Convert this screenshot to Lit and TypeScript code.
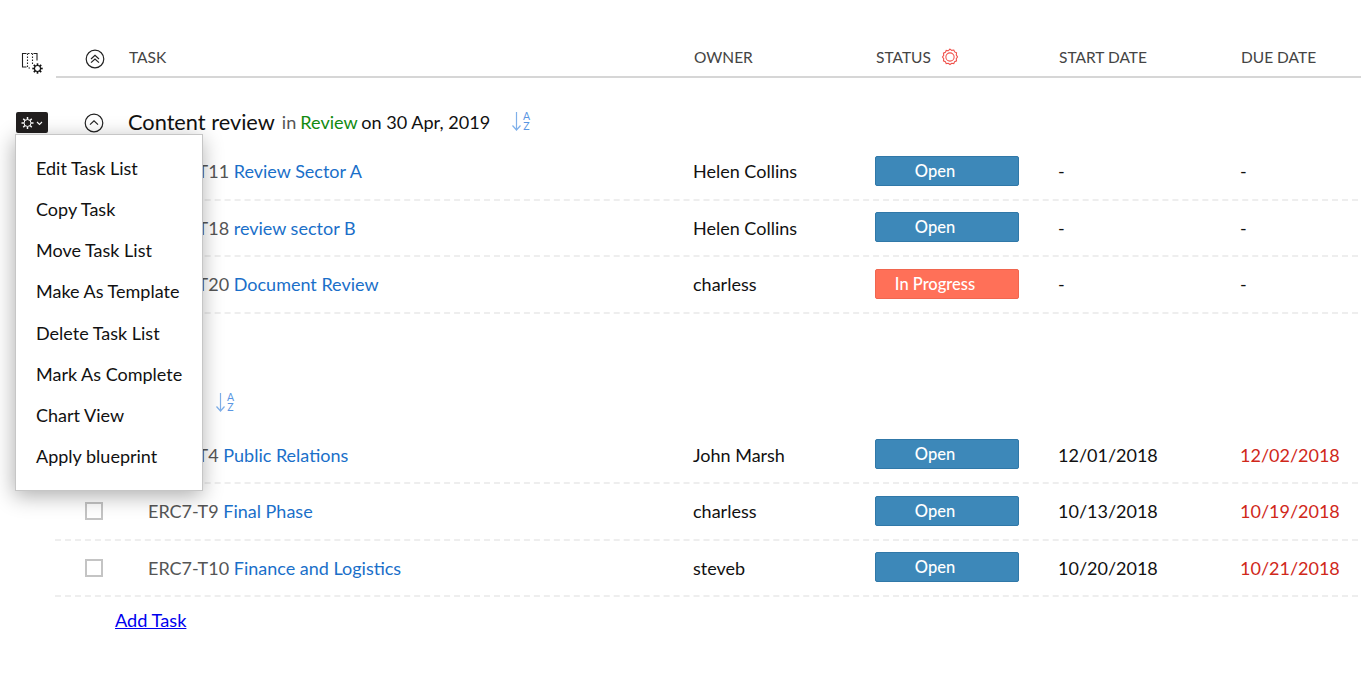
import { LitElement, html, css, svg } from "lit";
import { customElement } from "lit/decorators.js";

type Row = { prefix: string; id: string; occluded: boolean; name: string; owner: string; status: string; start: string; due: string };

const rowsA: Row[] = [
  { prefix: "ERC7-", id: "T11", occluded: true, name: "Review Sector A", owner: "Helen Collins", status: "Open", start: "-", due: "-" },
  { prefix: "ERC7-", id: "T18", occluded: true, name: "review sector B", owner: "Helen Collins", status: "Open", start: "-", due: "-" },
  { prefix: "ERC7-", id: "T20", occluded: true, name: "Document Review", owner: "charless", status: "In Progress", start: "-", due: "-" },
];
const rowsB: Row[] = [
  { prefix: "ERC7-", id: "T4", occluded: true, name: "Public Relations", owner: "John Marsh", status: "Open", start: "12/01/2018", due: "12/02/2018" },
  { prefix: "ERC7-", id: "T9", occluded: false, name: "Final Phase", owner: "charless", status: "Open", start: "10/13/2018", due: "10/19/2018" },
  { prefix: "ERC7-", id: "T10", occluded: false, name: "Finance and Logistics", owner: "steveb", status: "Open", start: "10/20/2018", due: "10/21/2018" },
];
const menu = ["Edit Task List", "Copy Task", "Move Task List", "Make As Template", "Delete Task List", "Mark As Complete", "Chart View", "Apply blueprint"];

function gear(cx: number, cy: number, r: number, teeth: number, color: string, sw: number) {
  const rays = [];
  for (let i = 0; i < teeth; i++) {
    const a = (i * Math.PI * 2) / teeth;
    rays.push(svg`<line x1=${cx + Math.cos(a) * r * 0.6} y1=${cy + Math.sin(a) * r * 0.6} x2=${cx + Math.cos(a) * r} y2=${cy + Math.sin(a) * r} stroke=${color} stroke-width=${sw * 1.5} />`);
  }
  return svg`<circle cx=${cx} cy=${cy} r=${r * 0.58} fill="none" stroke=${color} stroke-width=${sw} />${rays}`;
}

const sortIcon = html`<svg class="sort" width="20" height="22" viewBox="0 0 20 22" fill="none" stroke="#7fb0ea" stroke-width="1.2">
  <path d="M5.500 1V19M1.500 14.500l4 4.500 4-4.500" />
  <text x="15.500" y="8.500" text-anchor="middle" class="az">A</text>
  <text x="15.500" y="19" text-anchor="middle" class="az">Z</text>
</svg>`;

const collapseAll = html`<svg width="20" height="20" viewBox="0 0 20 20" fill="none" stroke="#222" stroke-width="1.200">
  <circle cx="10" cy="10" r="8.800" />
  <path d="M6 10l4-3.600 4 3.600M6 13.600l4-3.600 4 3.600" />
</svg>`;
const collapseOne = html`<svg width="20" height="20" viewBox="0 0 20 20" fill="none" stroke="#222" stroke-width="1.200">
  <circle cx="10" cy="10" r="8.800" />
  <path d="M6 11.600l4-3.800 4 3.800" />
</svg>`;
const columnsIcon = html`<svg width="24" height="24" viewBox="0 0 24 24" fill="none" stroke="#222" stroke-width="1.100">
  <path d="M5.500 2.500H1.500v13.500h4M12.500 2.500h3.500v7" />
  <path d="M6.500 2.500v15M11.500 2.500v11" stroke-dasharray="1.600 1.400" />
  <path d="M7 2.500h4" stroke-dasharray="1.500 1.500" />
  <path d="M7.500 17h3" stroke-dasharray="1.500 1.500" />
  ${gear(16.500, 17.500, 5.200, 8, "#111", 1.100)}
</svg>`;
const statusGear = html`<svg width="18" height="18" viewBox="0 0 17 17" fill="none" stroke="#f0504a" stroke-width="1">
  <path d="M8.500 1l1.600 1.200 2-.3.800 1.800 1.800.8-.3 2L15.600 8.500l-1.200 1.600.3 2-1.800.8-.8 1.800-2-.3-1.600 1.200-1.600-1.200-2 .3-.8-1.800-1.800-.8.3-2L1.400 8.500l1.200-1.600-.3-2 1.800-.8.8-1.800 2 .3z" />
  <circle cx="8.500" cy="8.500" r="3.900" />
</svg>`;

@customElement("app-root")
export class AppRoot extends LitElement {
  static styles = css`
    :host {
      display: block;
      position: relative;
      height: 697px;
      overflow: hidden;
      background: #fff;
      font-family: Lato, "Open Sans", sans-serif;
      color: #111;
    }
    .grid {
      display: grid;
      grid-template-columns: 30px 44px 564px 182px 183px 182px 1fr;
      align-items: center;
      margin-left: 55px;
    }
    .head {
      height: 36px;
      margin-top: 37px;
      margin-left: 56px;
      grid-template-columns: 29px 44px 565px 182px 183px 182px 1fr;
      position: relative;
      border-bottom: 2px solid #d6d6d6;
      padding-top: 2px;
      padding-bottom: 1px;
      font-size: 15.500px;
      color: #444;
    }
    .head svg {
      display: block;
    }
    .headicon {
      margin-top: 4px;
    }
    .cols {
      position: absolute;
      left: -35px;
      top: 14px;
    }
    .statushead {
      display: flex;
      align-items: center;
      gap: 10px;
    }
    .section {
      margin-top: 32px;
      height: 26px;
    }
    .section.second {
      margin-top: 77px;
    }
    .section svg {
      display: block;
    }
    .secticon {
      margin-left: -1px;
    }
    .title {
      grid-column: 3 / -1;
      display: flex;
      align-items: center;
      font-size: 18.100px;
      white-space: nowrap;
      margin-left: -1px;
      margin-top: -2px;
    }
    .title .name {
      font-size: 21.750px;
      margin-right: 7px;
    }
    .title .in {
      color: #555;
      margin-right: 4px;
    }
    .title .green {
      color: #118a11;
      margin-right: 3.500px;
    }
    .title .sort {
      margin-left: 21px;
      margin-top: -1px;
    }
    .spacer {
      width: 87px;
    }
    .second .sort {
      margin-left: 0;
      margin-top: 1px;
    }
    .az {
      font-family: Lato, sans-serif;
      font-size: 10.500px;
      fill: #5a96e2;
      stroke: none;
    }
    .row {
      height: 54.500px;
      border-bottom: 2px dashed #eeeeee;
      margin-right: 3px;
      font-size: 18px;
    }
    .rows {
      margin-top: 8px;
    }
    .rows.b {
      margin-top: 11px;
    }
    .check {
      grid-column: 1 / 3;
      justify-self: start;
      width: 18px;
      height: 18px;
      margin-left: 30px;
      border: 2px solid #c4c4c4;
      box-sizing: border-box;
      background: #fff;
    }
    .task {
      white-space: nowrap;
      padding-left: 19px;
    }
    .task .id {
      color: #555;
    }
    .task .prefix.occluded {
      visibility: hidden;
    }
    .task .nm {
      color: #1a6fc9;
    }
    .badge {
      width: 144px;
      height: 30px;
      margin-top: -1px;
      padding-right: 24px;
      border-radius: 2px;
      box-sizing: border-box;
      display: flex;
      align-items: center;
      justify-content: center;
      color: #fff;
      font-size: 16.500px;
      font-weight: 500;
    }
    .badge.open {
      background: #3d88b9;
      border: 1px solid #3078a8;
    }
    .badge.prog {
      background: #ff7058;
      border: 1px solid #f0664f;
    }
    .date.due {
      color: #d0281a;
    }
    .add {
      display: block;
      width: max-content;
      margin: 12px 0 0 115px;
      color: #0000ee;
      font-size: 18.200px;
      text-decoration: underline;
    }
    .gearbtn {
      position: absolute;
      left: 16px;
      top: 112px;
      width: 32px;
      height: 21px;
      background: #221f1f;
      border-radius: 2px;
      display: flex;
      align-items: center;
      justify-content: center;
    }
    .menu {
      position: absolute;
      left: 15px;
      top: 134px;
      width: 187.500px;
      height: 357px;
      box-sizing: border-box;
      background: #fff;
      border: 1px solid #c6c6c6;
      box-shadow: -1px 5px 20px rgba(0, 0, 0, 0.32);
      padding: 13px 0 0 20px;
      font-size: 18px;
      color: #111;
    }
    .menu div {
      height: 41.150px;
      line-height: 41px;
      white-space: nowrap;
    }
  `;

  private cells(r: Row) {
    return html`<div class="grid row">
      <div class="check"></div>
      <div class="task"><span class="id"><span class="prefix ${r.occluded ? "occluded" : ""}">${r.prefix}</span>${r.id}</span> <span class="nm">${r.name}</span></div>
      <div>${r.owner}</div>
      <div><div class="badge ${r.status === "Open" ? "open" : "prog"}">${r.status}</div></div>
      <div class="date">${r.start}</div>
      <div class="date ${r.due !== "-" ? "due" : ""}">${r.due}</div>
    </div>`;
  }

  render() {
    return html`
      <div class="grid head">
        <div class="cols">${columnsIcon}</div>
        <div style="grid-column:2"><div class="headicon">${collapseAll}</div></div>
        <div>TASK</div>
        <div>OWNER</div>
        <div class="statushead"><span>STATUS</span>${statusGear}</div>
        <div>START DATE</div>
        <div>DUE DATE</div>
      </div>
      <div class="grid section">
        <div style="grid-column:2"><div class="secticon">${collapseOne}</div></div>
        <div class="title">
          <span class="name">Content review</span>
          <span class="in">in</span><span class="green">Review</span><span>on 30 Apr, 2019</span>
          ${sortIcon}
        </div>
      </div>
      <div class="rows">${rowsA.map((r) => this.cells(r))}</div>
      <div class="grid section second">
        <div class="title"><span class="spacer"></span>${sortIcon}</div>
      </div>
      <div class="rows b">${rowsB.map((r) => this.cells(r))}</div>
      <a class="add">Add Task</a>
      <div class="gearbtn">
        <svg width="24" height="16" viewBox="0 0 24 16" fill="none">
          ${gear(7.500, 8, 6, 8, "#fff", 1)}
          <path d="M17 7l2.500 2.500L22 7" stroke="#fff" stroke-width="1.100" />
        </svg>
      </div>
      <div class="menu">${menu.map((m) => html`<div>${m}</div>`)}</div>
    `;
  }
}
